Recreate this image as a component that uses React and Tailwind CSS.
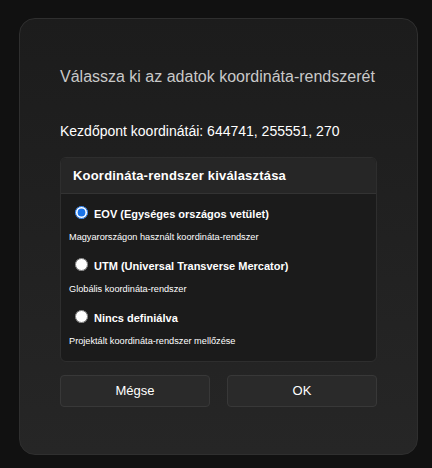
import { useState } from 'react';

const options = [
  { id: 'eov', label: 'EOV (Egységes országos vetület)', desc: 'Magyarországon használt koordináta-rendszer' },
  { id: 'utm', label: 'UTM (Universal Transverse Mercator)', desc: 'Globális koordináta-rendszer' },
  { id: 'none', label: 'Nincs definiálva', desc: 'Projektált koordináta-rendszer mellőzése' },
];

export default function App() {
  const [selected, setSelected] = useState('eov');

  return (
    <div className="min-h-[468px] w-[432px] bg-[#111111] pt-[18px] pl-[19px] font-['Liberation_Sans',Arial,sans-serif]">
      <div className="w-[399px] h-[437px] rounded-[16px] border border-[#2f2f2f] bg-gradient-to-b from-[#1c1c1c] to-[#262626] px-[40px] pt-[47px]">
        <h2 className="text-[16px] leading-[22px] text-[#c9c9c9]">Válassza ki az adatok koordináta-rendszerét</h2>
        <p className="mt-[33px] text-[14px] leading-[20px] text-white">Kezdőpont koordinátái: 644741, 255551, 270</p>

        <div className="mt-[16px] rounded-[6px] border border-[#2e2e2e] bg-[#1b1b1b] overflow-hidden">
          <div className="bg-[#262626] border-b border-[#333333] h-[36px] flex items-center px-[12px]">
            <span className="text-[13px] font-bold tracking-[0.2px] text-white">Koordináta-rendszer kiválasztása</span>
          </div>
          <div className="px-[8px] pt-[11px]">
            {options.map((o) => (
              <div key={o.id} className="h-[52px]">
                <label className="flex items-center gap-[6px] pl-[6px] h-[18px] cursor-pointer">
                  <input
                    type="radio"
                    name="crs"
                    checked={selected === o.id}
                    onChange={() => setSelected(o.id)}
                    className="m-0 w-[13px] h-[13px] accent-[#1a73e8] relative -top-[2px]"
                  />
                  <span className="text-[11px] font-bold text-white">{o.label}</span>
                </label>
                <p className="mt-[7px] text-[9.2px] leading-[14px] text-white">{o.desc}</p>
              </div>
            ))}
          </div>
        </div>

        <div className="mt-[13px] grid grid-cols-2 gap-[17px]">
          <button type="button" className="h-[32px] rounded-[4px] border border-[#383838] bg-[#2a2a2a] text-[13px] text-white">Mégse</button>
          <button type="button" className="h-[32px] rounded-[4px] border border-[#383838] bg-[#2a2a2a] text-[13px] text-white">OK</button>
        </div>
      </div>
    </div>
  );
}
